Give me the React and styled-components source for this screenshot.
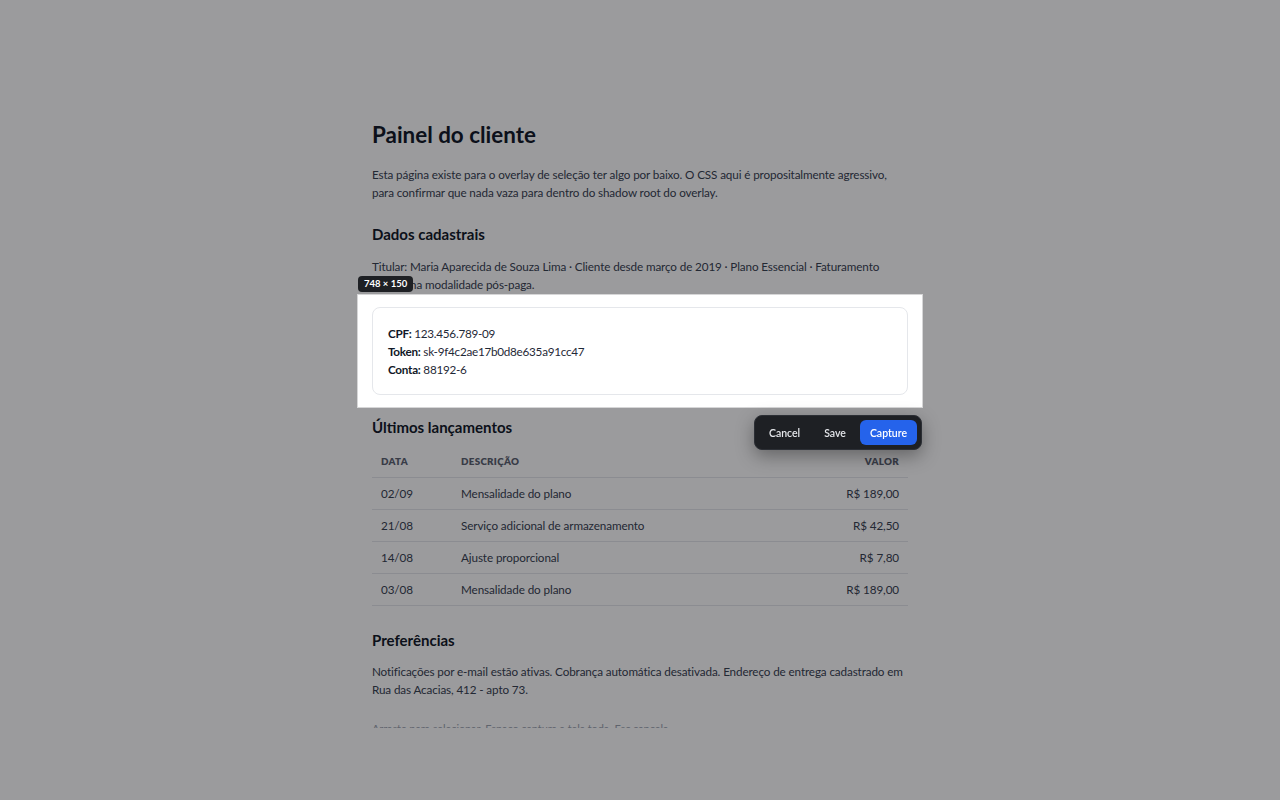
import React from "react";
import styled, { createGlobalStyle } from "styled-components";

const GlobalStyle = createGlobalStyle`
  html, body { margin: 0; padding: 0; background: #ffffff; }
  body {
    font-family: "Segoe UI", Lato, "Noto Sans", sans-serif;
    color: #374151;
    -webkit-font-smoothing: antialiased;
  }
`;

const Page = styled.div`
  height: 728px;
  overflow: hidden;
  background: #ffffff;
`;

const Main = styled.main`
  max-width: 536px;
  margin: 0 auto;
  padding-top: 121px;
`;

const Title = styled.h1`
  margin: 0 0 16px;
  font-size: 22.4px;
  line-height: 28px;
  font-weight: 700;
  color: #111827;
`;

const Para = styled.p`
  margin: 0;
  font-size: 11.7px;
  line-height: 18px;
  letter-spacing: -0.12px;
  color: #374151;
  max-width: ${(p) => p.$max || "none"};
`;

const Section = styled.h2`
  margin: ${(p) => p.$top || "23px"} 0 ${(p) => p.$bottom || "13px"};
  font-size: 15px;
  line-height: 20px;
  font-weight: 700;
  color: #111827;
`;

const Card = styled.div`
  margin-top: 14px;
  margin-bottom: -1px;
  padding: 16px 15px;
  border: 1px solid #e5e7eb;
  border-radius: 8px;
  font-size: 11.7px;
  line-height: 18px;
  letter-spacing: -0.25px;
  color: #1f2937;
`;

const Field = styled.div`
  b { color: #111827; font-weight: 700; }
`;

const Table = styled.table`
  width: 100%;
  border-collapse: collapse;
  margin-top: -4px;
  font-size: 11.7px;
  letter-spacing: -0.1px;
`;

const Th = styled.th`
  text-align: ${(p) => (p.$right ? "right" : "left")};
  padding: 8px 9px;
  font-size: 9.8px;
  line-height: 15px;
  font-weight: 800;
  text-transform: uppercase;
  letter-spacing: 0.03em;
  color: #5b6270;
  border-bottom: 1px solid #e5e7eb;
  width: ${(p) => p.$w || "auto"};
`;

const Td = styled.td`
  text-align: ${(p) => (p.$right ? "right" : "left")};
  padding: 8px 9px;
  line-height: 15px;
  color: #374151;
  border-bottom: 1px solid #e5e7eb;
`;

const Hint = styled.p`
  margin: 23px 0 0;
  font-size: 11px;
  line-height: 16px;
  letter-spacing: -0.1px;
  color: #9ca3af;
`;

const Overlay = styled.div`
  position: fixed;
  inset: 0;
  pointer-events: none;
  font-family: "Segoe UI", Lato, "Noto Sans", sans-serif;
`;

const Selection = styled.div`
  position: absolute;
  left: 358px;
  top: 295px;
  width: 564px;
  height: 112px;
  box-shadow: 0 0 0 9999px rgba(4, 6, 10, 0.4);
  outline: 1px solid rgba(255, 255, 255, 0.6);
`;

const SizeLabel = styled.div`
  position: absolute;
  left: 0;
  bottom: calc(100% + 3px);
  height: 16px;
  padding: 0 6px;
  border-radius: 4px;
  background: #1e2024;
  color: #ffffff;
  font-size: 9.5px;
  font-weight: 700;
  line-height: 16px;
  white-space: nowrap;
`;

const Toolbar = styled.div`
  position: absolute;
  right: 0;
  top: calc(100% + 8px);
  display: flex;
  gap: 4px;
  padding: 4px;
  background: #1e2024;
  border: 1px solid #2c2f35;
  border-radius: 8px;
  box-shadow: 0 6px 18px rgba(0, 0, 0, 0.35);
`;

const Btn = styled.button`
  height: 25px;
  padding: 0 10px;
  border: 0;
  border-radius: 6px;
  background: ${(p) => (p.$primary ? "#2563eb" : "transparent")};
  color: ${(p) => (p.$primary ? "#ffffff" : "#e5e7eb")};
  font-family: inherit;
  font-size: 10.5px;
  font-weight: 600;
  cursor: pointer;
`;

const rows = [
  ["02/09", "Mensalidade do plano", "R$ 189,00"],
  ["21/08", "Serviço adicional de armazenamento", "R$ 42,50"],
  ["14/08", "Ajuste proporcional", "R$ 7,80"],
  ["03/08", "Mensalidade do plano", "R$ 189,00"],
];

export default function App() {
  return (
    <>
      <GlobalStyle />
      <Page>
        <Main>
          <Title>Painel do cliente</Title>
          <Para $max="528px">
            Esta página existe para o overlay de seleção ter algo por baixo. O CSS aqui é
            propositalmente agressivo, para confirmar que nada vaza para dentro do shadow root
            do overlay.
          </Para>
          <Section>Dados cadastrais</Section>
          <Para>
            Titular: Maria Aparecida de Souza Lima · Cliente desde março de 2019 · Plano
            Essencial · Faturamento mensal na modalidade pós-paga.
          </Para>
          <Card>
            <Field><b>CPF:</b> 123.456.789-09</Field>
            <Field><b>Token:</b> sk-9f4c2ae17b0d8e635a91cc47</Field>
            <Field><b>Conta:</b> 88192-6</Field>
          </Card>
          <Section>Últimos lançamentos</Section>
          <Table>
            <thead>
              <tr>
                <Th $w="62px">Data</Th>
                <Th>Descrição</Th>
                <Th $right>Valor</Th>
              </tr>
            </thead>
            <tbody>
              {rows.map((r, i) => (
                <tr key={i}>
                  <Td>{r[0]}</Td>
                  <Td>{r[1]}</Td>
                  <Td $right>{r[2]}</Td>
                </tr>
              ))}
            </tbody>
          </Table>
          <Section $top="24px" $bottom="12px">Preferências</Section>
          <Para>
            Notificações por e-mail estão ativas. Cobrança automática desativada. Endereço de
            entrega cadastrado em Rua das Acacias, 412 - apto 73.
          </Para>
          <Hint>Arraste para selecionar. Espaço captura a tela toda. Esc cancela.</Hint>
        </Main>
      </Page>
      <Overlay>
        <Selection>
          <SizeLabel>748 × 150</SizeLabel>
          <Toolbar>
            <Btn>Cancel</Btn>
            <Btn>Save</Btn>
            <Btn $primary>Capture</Btn>
          </Toolbar>
        </Selection>
      </Overlay>
    </>
  );
}
